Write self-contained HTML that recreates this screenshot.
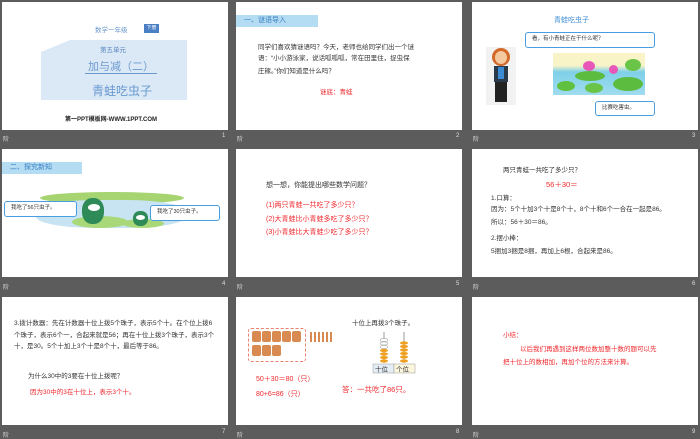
<!DOCTYPE html>
<html><head><meta charset="utf-8"><style>
*{margin:0;padding:0;box-sizing:border-box}
body{width:700px;height:438px;background:#5c5c5c;position:relative;overflow:hidden;font-family:"Liberation Sans","Noto Sans CJK SC",sans-serif}
.s{position:absolute;background:#fff;width:226px;height:128px;overflow:hidden}
.t{position:absolute;white-space:nowrap;font-size:6.5px;color:#333}
.r{color:#f0282d}
.ft{position:absolute;font-size:6px;color:#ddd}
.hb{position:absolute;background:#b4dcf2;color:#3a7fc4;font-size:7px;padding-left:8px;line-height:12px}
.bub{position:absolute;border:1.5px solid #4a9ee0;border-radius:3px;background:#fff;font-size:5.5px;color:#333;padding-left:6px;white-space:nowrap}
</style></head><body>

<!-- row 1 -->
<div class="s" style="left:2px;top:2px">
 <div class="t" style="left:93px;top:22px;font-size:6.5px;color:#6a9ad0">数学一年级</div>
 <div class="t" style="left:142px;top:22px;width:15px;height:9px;background:#4a7fc4;color:#fff;font-size:5px;text-align:center;line-height:9px">下册</div>
 <svg style="position:absolute;left:39px;top:38px" width="146" height="60"><polygon points="29,0 146,0 146,60 0,60 0,12" fill="#dbe8f6"/></svg>
 <div class="t" style="left:98px;top:42px;font-size:6.5px;color:#5a86c0">第五单元</div>
 <div class="t" style="left:86px;top:56px;font-size:11px;color:#6a9ad0">加与减（二）</div>
 <div style="position:absolute;left:83px;top:71px;width:72px;height:1px;background:#6a9ad0"></div>
 <div class="t" style="left:90px;top:80px;font-size:12px;color:#6a9ad0">青蛙吃虫子</div>
 <div class="t" style="left:63px;top:112px;font-size:6px;font-weight:bold;color:#222">第一PPT模板网-WWW.1PPT.COM</div>
</div>
<div class="ft" style="left:3px;top:134px">阶</div><div class="ft" style="left:222px;top:133px">1</div>

<div class="s" style="left:236px;top:2px">
 <div class="hb" style="left:0;top:13px;width:82px">一、谜语导入</div>
 <div class="t" style="left:22px;top:39px">同学们喜欢猜谜语吗？今天，老师也给同学们出一个谜</div>
 <div class="t" style="left:22px;top:50px">语：“小小游泳家，说话呱呱呱，常在田里住，捉虫保</div>
 <div class="t" style="left:22px;top:63px">庄稼。”你们知道是什么吗？</div>
 <div class="t r" style="left:84px;top:84px">谜底：青蛙</div>
</div>
<div class="ft" style="left:237px;top:134px">阶</div><div class="ft" style="left:456px;top:133px">2</div>

<div class="s" style="left:472px;top:2px">
 <div class="t" style="left:82px;top:13px;font-size:7px;color:#3a8ad4">青蛙吃虫子</div>
 <div class="bub" style="left:53px;top:30px;width:130px;height:16px;line-height:13px">看，有小青蛙正在干什么呢？</div>
 <div style="position:absolute;left:14px;top:45px;width:30px;height:58px;background:#f2f2f2">
  <div style="position:absolute;left:6px;top:1px;width:18px;height:18px;border-radius:50%;background:#d46a2a"></div>
  <div style="position:absolute;left:9px;top:4px;width:12px;height:13px;border-radius:50%;background:#f5c9a0"></div>
  <div style="position:absolute;left:8px;top:19px;width:14px;height:16px;background:#2a3a4a"></div>
  <div style="position:absolute;left:12px;top:20px;width:6px;height:12px;background:#3a8ad4"></div>
  <div style="position:absolute;left:9px;top:35px;width:12px;height:20px;background:#222"></div>
 </div>
 <div style="position:absolute;left:81px;top:51px;width:92px;height:42px;background:linear-gradient(#f8f4c8 0,#f8f4c8 30%,#7ed0e8 45%,#a0dcef 100%)">
  <div style="position:absolute;left:30px;top:8px;width:12px;height:10px;border-radius:50%;background:#e858b8"></div>
  <div style="position:absolute;left:56px;top:12px;width:9px;height:9px;border-radius:50%;background:#e858b8"></div>
  <div style="position:absolute;left:22px;top:18px;width:30px;height:10px;border-radius:50%;background:#5cbc40"></div>
  <div style="position:absolute;left:60px;top:24px;width:30px;height:14px;border-radius:50%;background:#5cbc40"></div>
  <div style="position:absolute;left:4px;top:28px;width:18px;height:10px;border-radius:50%;background:#60c040"></div>
  <div style="position:absolute;left:72px;top:6px;width:16px;height:12px;border-radius:50%;background:#6ac448"></div>
  <div style="position:absolute;left:32px;top:30px;width:18px;height:10px;border-radius:50%;background:#6ac448"></div>
 </div>
 <div class="bub" style="left:123px;top:99px;width:60px;height:15px;line-height:12px">比赛吃害虫。</div>
</div>
<div class="ft" style="left:473px;top:134px">阶</div><div class="ft" style="left:692px;top:133px">3</div>

<!-- row 2 -->
<div class="s" style="left:2px;top:149px">
 <div class="hb" style="left:0;top:13px;width:80px">二、探究新知</div>
 <div style="position:absolute;left:34px;top:43px;width:152px;height:38px">
  <div style="position:absolute;left:4px;top:0;width:144px;height:12px;border-radius:50%;background:#a6d470"></div>
  <div style="position:absolute;left:0;top:8px;width:150px;height:28px;border-radius:40%;background:#c8e4f2"></div>
  <div style="position:absolute;left:36px;top:24px;width:56px;height:12px;border-radius:50%;background:#a8d878"></div>
  <div style="position:absolute;left:86px;top:27px;width:42px;height:9px;border-radius:50%;background:#a8d878"></div>
  <div style="position:absolute;left:46px;top:6px;width:22px;height:26px;border-radius:45%;background:#2e8a56"></div>
  <div style="position:absolute;left:52px;top:12px;width:12px;height:7px;border-radius:50%;background:#fff"></div>
  <div style="position:absolute;left:97px;top:19px;width:15px;height:15px;border-radius:45%;background:#2e8a56"></div>
  <div style="position:absolute;left:100px;top:23px;width:9px;height:5px;border-radius:50%;background:#fff"></div>
 </div>
 <div class="bub" style="left:2px;top:52px;width:73px;height:16px;line-height:13px">我吃了56只虫子。</div>
 <div class="bub" style="left:148px;top:56px;width:70px;height:16px;line-height:13px">我吃了30只虫子。</div>
</div>
<div class="ft" style="left:3px;top:282px">阶</div><div class="ft" style="left:222px;top:281px">4</div>

<div class="s" style="left:236px;top:149px">
 <div class="t" style="left:30px;top:31px;font-size:7px">想一想，你能提出哪些数学问题？</div>
 <div class="t r" style="left:30px;top:51px;font-size:7px">(1)两只青蛙一共吃了多少只？</div>
 <div class="t r" style="left:30px;top:65px;font-size:7px">(2)大青蛙比小青蛙多吃了多少只？</div>
 <div class="t r" style="left:30px;top:78px;font-size:7px">(3)小青蛙比大青蛙少吃了多少只？</div>
</div>
<div class="ft" style="left:237px;top:282px">阶</div><div class="ft" style="left:456px;top:281px">5</div>

<div class="s" style="left:472px;top:149px">
 <div class="t" style="left:31px;top:15px">两只青蛙一共吃了多少只？</div>
 <div class="t r" style="left:74px;top:30px;font-size:7.5px">56＋30＝</div>
 <div class="t" style="left:19px;top:43px">1.口算：</div>
 <div class="t" style="left:19px;top:54px">因为：5个十加3个十是8个十，8个十和6个一合在一起是86。</div>
 <div class="t" style="left:19px;top:67px">所以：56＋30＝86。</div>
 <div class="t" style="left:19px;top:83px">2.摆小棒：</div>
 <div class="t" style="left:19px;top:96px">5捆加3捆是8捆，再加上6根，合起来是86。</div>
</div>
<div class="ft" style="left:473px;top:282px">阶</div><div class="ft" style="left:692px;top:281px">6</div>

<!-- row 3 -->
<div class="s" style="left:2px;top:297px">
 <div class="t" style="left:12px;top:20px">3.拨计数器：先在计数器十位上拨5个珠子，表示5个十。在个位上拨6</div>
 <div class="t" style="left:12px;top:32px">个珠子，表示6个一，合起来就是56；再在十位上拨3个珠子，表示3个</div>
 <div class="t" style="left:12px;top:43px">十，是30。5个十加上3个十是8个十，最后等于86。</div>
 <div class="t" style="left:26px;top:73px">为什么30中的3要在十位上拨呢？</div>
 <div class="t r" style="left:28px;top:89px">因为30中的3在十位上，表示3个十。</div>
</div>
<div class="ft" style="left:3px;top:430px">阶</div><div class="ft" style="left:222px;top:429px">7</div>

<div class="s" style="left:236px;top:297px">
 <div class="t" style="left:116px;top:20px">十位上再拨3个珠子。</div>
 <div style="position:absolute;left:12px;top:31px;width:58px;height:34px;border:1px dashed #e88070;border-radius:3px"></div>
 <svg style="position:absolute;left:16px;top:33px" width="120" height="32">
  <g fill="#d88a50">
   <rect x="0" y="1" width="9" height="11" rx="2"/><rect x="10" y="1" width="9" height="11" rx="2"/><rect x="20" y="1" width="9" height="11" rx="2"/><rect x="30" y="1" width="9" height="11" rx="2"/><rect x="40" y="1" width="9" height="11" rx="2"/>
   <rect x="0" y="15" width="9" height="11" rx="2"/><rect x="10" y="15" width="9" height="11" rx="2"/><rect x="20" y="15" width="9" height="11" rx="2"/>
   <rect x="58" y="2" width="2" height="10"/><rect x="62" y="2" width="2" height="10"/><rect x="66" y="2" width="2" height="10"/><rect x="70" y="2" width="2" height="10"/><rect x="74" y="2" width="2" height="10"/><rect x="78" y="2" width="2" height="10"/>
  </g>
 </svg>
 <svg style="position:absolute;left:135px;top:35px" width="48" height="42">
  <line x1="13" y1="0" x2="13" y2="31" stroke="#999"/><line x1="33" y1="0" x2="33" y2="31" stroke="#999"/>
  <g fill="#fff" stroke="#888" stroke-width=".5"><ellipse cx="13" cy="8" rx="4" ry="1.6"/><ellipse cx="13" cy="11.5" rx="4" ry="1.6"/><ellipse cx="13" cy="15" rx="4" ry="1.6"/></g>
  <g fill="#f0a020"><ellipse cx="13" cy="18.5" rx="4" ry="1.6"/><ellipse cx="13" cy="22" rx="4" ry="1.6"/><ellipse cx="13" cy="25.5" rx="4" ry="1.6"/><ellipse cx="13" cy="29" rx="4" ry="1.6"/></g>
  <g fill="#f0a020"><ellipse cx="33" cy="11" rx="4" ry="1.6"/><ellipse cx="33" cy="14.5" rx="4" ry="1.6"/><ellipse cx="33" cy="18" rx="4" ry="1.6"/><ellipse cx="33" cy="21.5" rx="4" ry="1.6"/><ellipse cx="33" cy="25" rx="4" ry="1.6"/><ellipse cx="33" cy="29" rx="4" ry="1.6"/></g>
  <rect x="2" y="32" width="21" height="9" fill="#e4ecf4" stroke="#999" stroke-width=".5"/><rect x="23" y="32" width="21" height="9" fill="#fbf6dc" stroke="#999" stroke-width=".5"/>
  <text x="4" y="39.5" font-size="6.5" fill="#333" font-family="Noto Sans CJK SC">十位</text><text x="25" y="39.5" font-size="6.5" fill="#333" font-family="Noto Sans CJK SC">个位</text>
 </svg>
 <div class="t r" style="left:20px;top:77px;font-size:7px">50＋30＝80（只）</div>
 <div class="t r" style="left:20px;top:92px;font-size:7px">80+6=86（只）</div>
 <div class="t r" style="left:106px;top:87px;font-size:7.5px">答：一共吃了86只。</div>
</div>
<div class="ft" style="left:237px;top:430px">阶</div><div class="ft" style="left:456px;top:429px">8</div>

<div class="s" style="left:472px;top:297px">
 <div class="t r" style="left:31px;top:32px">小结：</div>
 <div class="t r" style="left:48px;top:46px">以后我们再遇到这样两位数加整十数的题可以先</div>
 <div class="t r" style="left:31px;top:59px">把十位上的数相加，再加个位的方法来计算。</div>
</div>
<div class="ft" style="left:473px;top:430px">阶</div><div class="ft" style="left:692px;top:429px">9</div>

</body></html>
